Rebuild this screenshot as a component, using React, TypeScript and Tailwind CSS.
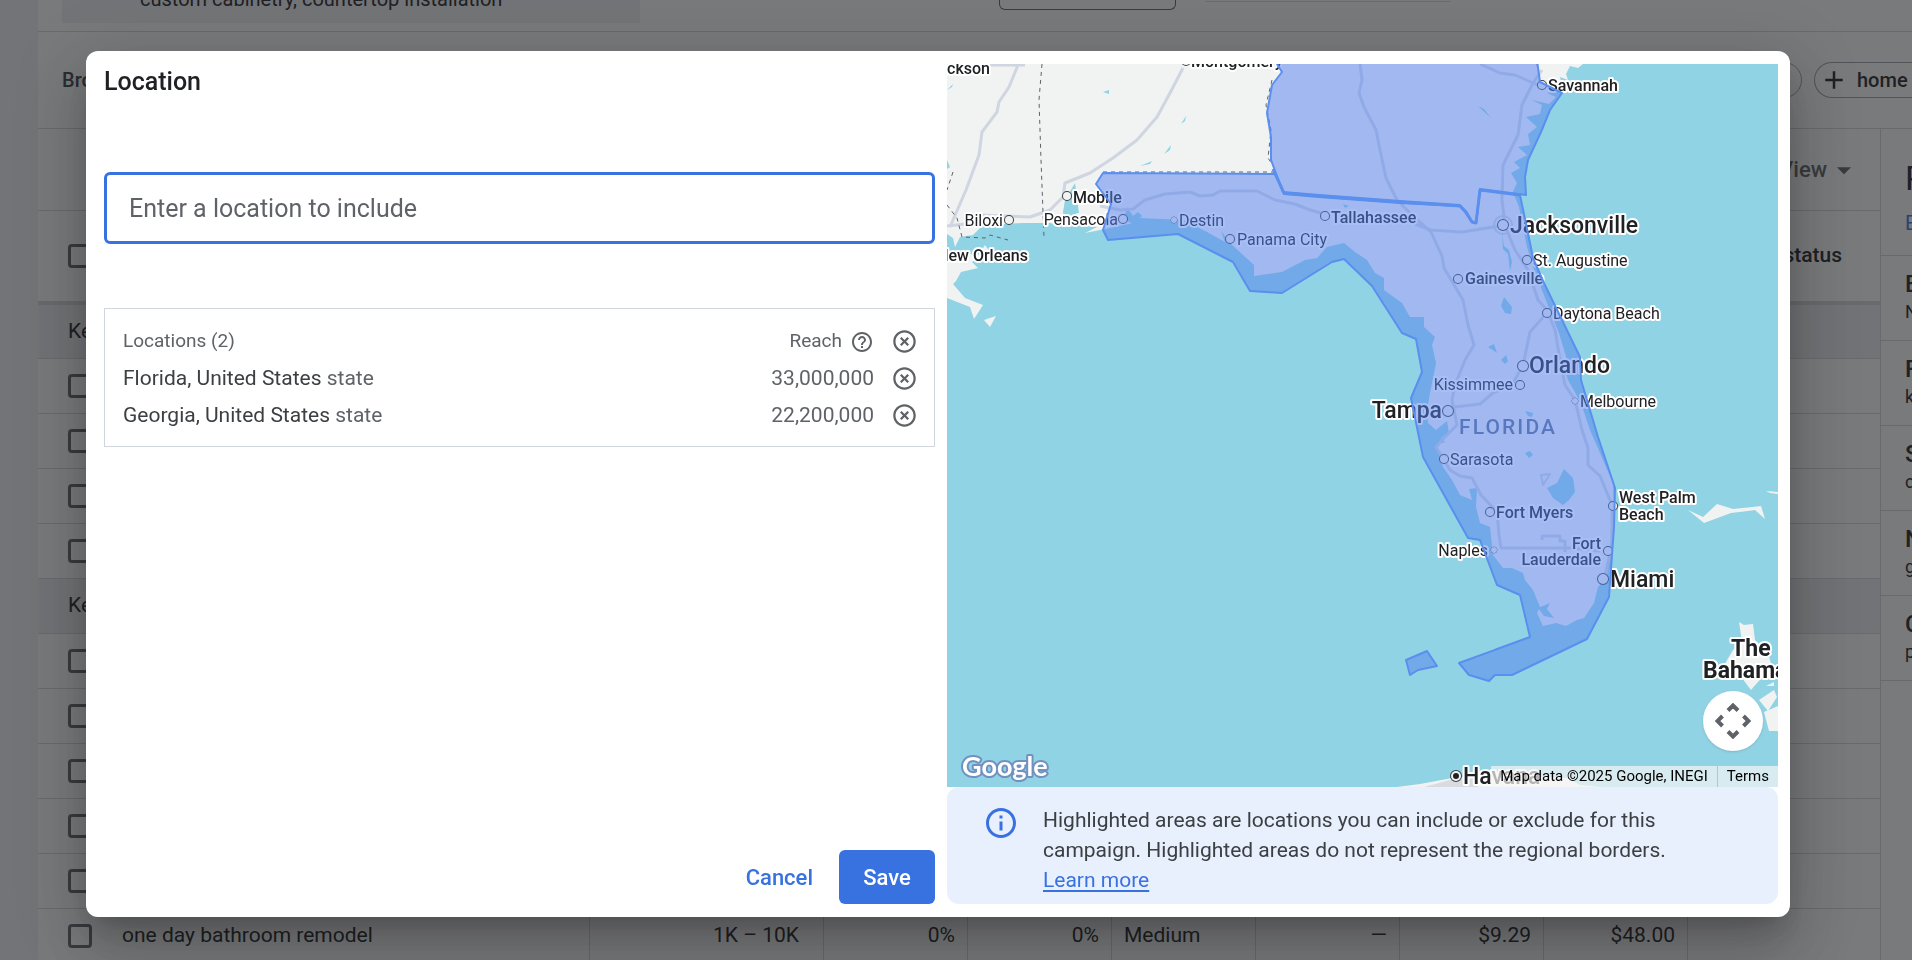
import React from "react";
import clsx from "clsx";
import {
  MdAdd,
  MdArrowDropDown,
  MdHelpOutline,
  MdHighlightOff,
  MdInfoOutline,
} from "react-icons/md";

type KeywordRow = {
  id: string;
  group?: string;
  keyword?: string;
  cells?: string[];
};

const keywordRows: KeywordRow[] = [
  { id: "provided", group: "Keywords you provided" },
  { id: "p1" },
  { id: "p2" },
  { id: "p3" },
  { id: "p4" },
  { id: "ideas", group: "Keyword ideas" },
  { id: "i1" },
  { id: "i2" },
  { id: "i3" },
  { id: "i4" },
  { id: "i5" },
  {
    id: "i6",
    keyword: "one day bathroom remodel",
    cells: ["1K – 10K", "0%", "0%", "Medium", "—", "$9.29", "$48.00", ""],
  },
];

const refinements = [
  ["B", "N"],
  ["F", "k"],
  ["S", "c"],
  ["N", "g"],
  ["C", "p"],
];

const locations = [
  { name: "Florida, United States", type: "state", reach: "33,000,000" },
  { name: "Georgia, United States", type: "state", reach: "22,200,000" },
];

function Checkbox({ label }: { label: string }) {
  return (
    <input
      type="checkbox"
      aria-label={label}
      className="block size-6 shrink-0 appearance-none rounded-[4px] border-3 border-[#5f6368]"
    />
  );
}

function KeywordTable() {
  return (
    <table className="w-full table-fixed border-separate border-spacing-0 text-left text-[21px]">
      <colgroup>
        <col className="w-[552px]" />
        <col className="w-[234px]" />
        <col className="w-36" />
        <col className="w-36" />
        <col className="w-36" />
        <col className="w-36" />
        <col className="w-36" />
        <col className="w-36" />
        <col />
      </colgroup>
      <thead>
        <tr>
          <th className="h-[94px] border-b-4 border-[#d5d7da] pl-[30px]">
            <Checkbox label="Select all keywords" />
          </th>
          <th
            colSpan={8}
            className="border-b-4 border-[#d5d7da] pr-[38px] text-right font-medium"
          >
            Account status
          </th>
        </tr>
      </thead>
      <tbody>
        {keywordRows.map((row) =>
          row.group ? (
            <tr key={row.id} className="bg-[#ebedef]">
              <td
                colSpan={9}
                className={clsx(
                  "border-b border-[#d5d7da] py-0 pl-[30px]",
                  row.id === "provided" ? "h-[54px]" : "h-[55px]"
                )}
              >
                {row.group}
              </td>
            </tr>
          ) : (
            <tr key={row.id}>
              <td className="h-[55px] border-r border-b border-[#d5d7da] py-0 pl-[30px]">
                <div className="flex items-center gap-[30px]">
                  <Checkbox label={row.keyword ?? `Keyword ${row.id}`} />
                  {row.keyword}
                </div>
              </td>
              {row.cells ? (
                row.cells.map((cell, i) => (
                  <td
                    key={i}
                    className={clsx(
                      "border-b border-[#d5d7da] py-0",
                      i < 7 && "border-r",
                      i === 0 && "pr-6 text-right",
                      i === 3 && "pl-3",
                      i > 0 && i !== 3 && "pr-3 text-right"
                    )}
                  >
                    {cell}
                  </td>
                ))
              ) : (
                <td colSpan={8} className="border-b border-[#d5d7da]" />
              )}
            </tr>
          )
        )}
      </tbody>
    </table>
  );
}

function KeywordPlanner() {
  return (
    <div className="flex h-screen flex-col overflow-hidden bg-[#f0f1f3] pl-[38px] text-[#202124]">
      <div className="flex h-8 shrink-0 items-start border-b border-[#d5d7da] bg-white pl-6">
        <div className="h-[23px] w-[578px] shrink-0 bg-[#f0f1f3] pl-[78px] text-xl leading-none">
          <div className="-mt-[11px]">custom cabinetry, countertop installation</div>
        </div>
        <div className="ml-[359px] h-2.5 w-[177px] shrink-0 rounded-b-md border border-t-0 border-[#5f6368]" />
        <div className="ml-[30px] h-0.5 w-[244px] shrink-0 border-b border-[#d5d7da]" />
      </div>

      <div className="flex h-[97px] shrink-0 items-center justify-between border-b border-[#d5d7da] bg-white pl-6">
        <span className="text-xl font-medium text-[#3c4043]">
          Broaden your search
        </span>
        <div className="flex shrink-0 gap-3">
          <button
            type="button"
            aria-label="Add suggestion"
            className="h-9 w-32 rounded-full border border-[#9aa0a6]"
          />
          <button
            type="button"
            className="flex h-9 w-[98px] items-center gap-2 rounded-l-full border border-r-0 border-[#9aa0a6] pl-1 text-xl font-medium"
          >
            <MdAdd size={30} />
            home
          </button>
        </div>
      </div>

      <div className="flex flex-1">
        <div className="min-w-0 flex-1 bg-white">
          <div className="flex h-[82px] items-center justify-end border-b border-[#d5d7da] pr-[19px] text-[22px] font-medium text-[#5f6368]">
            View
            <MdArrowDropDown size={34} />
          </div>
          <KeywordTable />
        </div>
        <aside className="w-8 shrink-0 overflow-hidden border-l border-[#d5d7da] bg-white">
          <div className="flex h-[127px] flex-col border-b border-[#d5d7da] pt-8 pl-6">
            <span className="text-[34px] leading-[34px]">R</span>
            <a href="#refine" className="pt-4 text-xl leading-6 text-[#3871e0]">
              E
            </a>
          </div>
          {refinements.map(([title, detail], i) => (
            <div
              key={i}
              className="flex h-[85px] flex-col justify-center border-b border-[#d5d7da] pl-6"
            >
              <span className="text-2xl leading-7 font-medium">{title}</span>
              <span className="text-lg leading-7">{detail}</span>
            </div>
          ))}
        </aside>
      </div>
    </div>
  );
}

type City = {
  name: string;
  x: number;
  y: number;
  size?: "md" | "lg";
  weight?: "medium" | "bold";
  end?: boolean;
  dot?: [number, number, number];
};

const cities: City[] = [
  { name: "Jackson", x: 990, y: 74, weight: "medium", end: true },
  { name: "Montgomery", x: 1191, y: 67, weight: "medium", dot: [1186, 61, 4] },
  { name: "Mobile", x: 1073, y: 203, weight: "medium", dot: [1067, 196, 4] },
  { name: "Biloxi", x: 1003, y: 226, end: true, dot: [1009, 220, 4] },
  { name: "Pensacola", x: 1118, y: 225, end: true, dot: [1123, 219, 4] },
  { name: "New Orleans", x: 1028, y: 261, weight: "medium", end: true },
  { name: "Destin", x: 1179, y: 226, dot: [1174, 220, 3] },
  { name: "Panama City", x: 1237, y: 245, dot: [1230, 239, 4] },
  { name: "Tallahassee", x: 1331, y: 223, weight: "medium", dot: [1325, 216, 4] },
  { name: "Savannah", x: 1548, y: 91, weight: "medium", dot: [1542, 85, 4] },
  { name: "Jacksonville", x: 1510, y: 233, size: "lg", weight: "medium", dot: [1503, 225, 5] },
  { name: "St. Augustine", x: 1533, y: 266, dot: [1527, 260, 4] },
  { name: "Gainesville", x: 1465, y: 284, weight: "medium", dot: [1458, 279, 4] },
  { name: "Daytona Beach", x: 1553, y: 319, dot: [1547, 313, 4] },
  { name: "Orlando", x: 1529, y: 373, size: "lg", weight: "medium", dot: [1523, 366, 5] },
  { name: "Kissimmee", x: 1513, y: 390, end: true, dot: [1520, 385, 4] },
  { name: "Melbourne", x: 1580, y: 407, dot: [1575, 401, 3] },
  { name: "Tampa", x: 1442, y: 418, size: "lg", weight: "medium", end: true, dot: [1448, 411, 5] },
  { name: "Sarasota", x: 1450, y: 465, dot: [1444, 459, 4] },
  { name: "Fort Myers", x: 1496, y: 518, weight: "medium", dot: [1490, 512, 4] },
  { name: "West Palm", x: 1619, y: 503, weight: "medium", dot: [1613, 506, 4] },
  { name: "Beach", x: 1619, y: 520, weight: "medium" },
  { name: "Fort", x: 1601, y: 549, weight: "medium", end: true, dot: [1608, 551, 4] },
  { name: "Lauderdale", x: 1601, y: 565, weight: "medium", end: true },
  { name: "Naples", x: 1488, y: 556, end: true, dot: [1494, 550, 3] },
  { name: "Miami", x: 1610, y: 587, size: "lg", weight: "medium", dot: [1603, 579, 5] },
  { name: "The", x: 1731, y: 656, size: "lg", weight: "bold" },
  { name: "Bahamas", x: 1703, y: 678, size: "lg", weight: "bold" },
  { name: "Havana", x: 1463, y: 784, size: "lg", weight: "medium", dot: [1456, 776, 5] },
];

const mainland =
  "M947 64H1583L1578 68L1570 66L1566 74L1568 80L1560 77L1563 90L1547 93L1556 97L1549 104L1532 100L1542 105L1540 114L1526 117L1537 127L1528 134L1530 145L1518 147L1527 155L1514 162L1520 168L1511 173L1517 183L1513 192L1519 207L1523 227L1527 247L1534 270L1547 303L1559 333L1567 360L1561 358L1568 380L1581 403L1590 430L1603 460L1613 483L1614 507L1610 547L1607 577L1598 587L1594 603L1584 618L1577 620L1566 626L1556 623L1543 626L1537 613L1540 607L1533 590L1525 580L1523 573L1512 568L1503 568L1493 555L1490 527L1480 523L1476 507L1477 488L1469 489L1472 500L1460 495L1452 480L1443 467L1437 445L1445 442L1441 438L1449 433L1447 421L1436 430L1428 423L1427 410L1430 393L1436 363L1432 345L1435 337L1424 327L1424 317L1410 317L1402 303L1384 290L1384 278L1375 273L1367 260L1355 252L1344 243L1327 247L1317 258L1305 260L1282 272L1254 276L1254 265L1232 245L1221 231L1225 242L1207 232L1183 220L1140 218L1133 223L1110 228L1085 233L1097 227L1077 223L1076 205L1070 200L1065 203L1063 213L1067 227L1050 223L1023 223L983 225L973 235L960 237L955 247L953 238L947 234Z";

function MapLand() {
  return (
    <g>
      <g fill="#f0f3f2">
        <path d={mainland} />
        <path d="M947 258L966 252L977 257L985 245L990 252L972 262L978 268L961 272L956 281L953 284L965 298L983 305L974 319L970 307L947 298Z" />
        <path d="M984 320L996 316L990 327Z" />
        <path d="M1688 510L1703 517L1717 504L1733 509L1761 506L1765 519L1755 510L1731 513L1704 523Z" />
        <path d="M1766 491L1778 492V494L1770 493Z" />
        <path d="M1739 622L1744 625L1753 624L1755 640L1768 653L1772 667L1757 683L1751 690L1742 678L1723 667L1733 650L1742 642Z" />
        <path d="M1766 686L1774 682L1774 686Z" />
        <path d="M1759 700L1774 690L1777 697L1768 711Z" />
        <path d="M1764 712L1778 706V731H1769Z" />
        <path d="M1397 787L1420 784L1452 778L1500 774L1568 778L1580 785L1601 787Z" />
      </g>
      <path d="M1424 787L1454 779L1480 777L1478 787Z" fill="#d8dbe0" />
      {/* lakes and inlets */}
      <g fill="#90d3e5">
        <path d="M1564 469L1573 478L1575 492L1569 500L1563 505L1553 498L1547 488L1557 483Z" />
        <path d="M1103 92L1109 90L1109 94Z" />
        <path d="M1181 124L1186 116L1185 121Z" />
        <path d="M1164 154L1171 145L1170 150Z" />
        <path d="M1140 166L1152 161L1150 164Z" />
        <path d="M947 90L953 84L952 87Z" />
        <path d="M947 160L950 167L947 169Z" />
        <path d="M1075 183L1079 213L1063 213L1065 200Z" />
        <path d="M1127 207L1133 216L1138 212L1142 216L1133 224L1124 219Z" />
        <path d="M1478 106L1484 109L1491 118Z" />
        <path d="M1343 204L1349 206L1345 208Z" />
        <path d="M1502 233L1503 249L1508 254L1510 271L1512 262L1509 250L1504 246Z" />
        <path d="M1504 297L1512 307L1511 314L1505 313L1501 306Z" />
        <path d="M1488 347L1494 344L1497 353Z" />
        <path d="M1501 360L1506 355L1508 361L1505 364Z" />
        <path d="M1525 411L1533 413L1532 417L1528 416Z" />
        <path d="M1525 453L1530 451L1533 455L1529 458Z" />
        <path d="M1538 608L1550 603L1547 609L1554 618L1544 616Z" />
      </g>
      <g fill="none" stroke="#cfd5e1" strokeWidth="3" strokeLinejoin="round">
        <path d="M990 65H1025" />
        <path d="M1018 65L1009 87L999 102L997 112L982 132L979 155L966 190L950 227" />
        <path d="M1183 68L1170 93L1157 117L1137 140L1113 158L1090 173L1065 183L1063 197L1050 210L1030 217L983 215" />
        <path d="M947 226L965 224" />
        <path d="M1100 206L1120 210L1133 209L1145 200L1165 194L1190 192L1200 196L1213 195L1220 191H1257L1275 200L1295 204L1310 210L1325 214" />
        <path d="M1360 64L1362 80L1359 93L1364 107L1376 130L1380 150L1386 178L1397 200L1415 218L1431 232L1442 256L1444 268L1463 300L1468 325L1474 345L1465 360L1455 385L1452 400L1457 425L1444 438L1436 447L1450 470L1460 476L1472 478L1481 495L1497 512L1499 535L1501 548H1570L1600 551" />
        <path d="M1415 224L1431 230L1462 232L1500 226" />
        <path d="M1542 70L1533 83L1522 105L1518 135L1503 165L1502 200L1505 226L1515 250L1528 270L1538 300L1547 310L1555 330L1560 360L1565 385L1575 400L1582 430L1588 448L1588 465L1600 476L1612 505L1612 545L1604 580" />
        <path d="M1480 64L1500 73L1515 75L1540 86" />
        <path d="M1545 315L1530 332L1523 365L1512 385L1493 393L1480 404L1455 407" />
        <circle cx="1503" cy="225" r="9" strokeWidth="2" />
        <path d="M1541 475L1550 474L1543 485Z" strokeWidth="2" />
        <path d="M1542 540V536H1560V541H1565V552" strokeWidth="3" />
      </g>
      <g fill="none" stroke="#5f6368" strokeWidth="1" strokeDasharray="4 4">
        <path d="M1042 64L1039 100L1041 160L1044 238" />
        <path d="M1103 172H1276" />
        <path d="M1272 80L1266 105L1271 130L1268 158L1272 164" />
        <path d="M1537 64L1540 82" />
        <path d="M953 172L947 190M947 205L957 218L962 237L985 238L990 235L1008 240" />
      </g>
    </g>
  );
}

function MapLabels() {
  return (
    <g
      fill="#202124"
      stroke="#ffffff"
      strokeWidth="4"
      strokeLinejoin="round"
      paintOrder="stroke"
      className="font-[Roboto,sans-serif]"
    >
      {cities.map((city) => (
        <React.Fragment key={city.name}>
          <text
            x={city.x}
            y={city.y}
            textAnchor={city.end ? "end" : "start"}
            className={clsx(
              city.size === "lg" ? "text-[23px]" : "text-base",
              city.weight === "bold" && "font-bold",
              city.weight === "medium" && "font-medium"
            )}
          >
            {city.name}
          </text>
          {city.dot && (
            <circle
              cx={city.dot[0]}
              cy={city.dot[1]}
              r={city.dot[2]}
              fill="#f0f3f2"
              stroke="#3c4043"
              strokeWidth={city.dot[2] === 3 ? 1 : 2}
            />
          )}
        </React.Fragment>
      ))}
      <circle cx="1456" cy="776" r="3" fill="#202124" stroke="none" />
      <text
        x="1459"
        y="434"
        fill="#5f6f8f"
        stroke="none"
        className="text-[21px] font-medium tracking-widest"
      >
        FLORIDA
      </text>
    </g>
  );
}

function LocationMap() {
  return (
    <div className="relative min-h-0 flex-1 overflow-hidden bg-[#90d3e5]">
      <svg
        role="img"
        aria-label="Map of the targeted locations"
        viewBox="947 64 831 723"
        preserveAspectRatio="xMidYMid slice"
        className="block size-full"
      >
        <MapLand />
        <MapLabels />
        <g
          fill="#527fee"
          fillOpacity="0.5"
          stroke="#5b8fee"
          strokeWidth="2"
          strokeLinejoin="round"
        >
          {/* Georgia */}
          <path d="M1277 60V64L1282 72L1272 85L1267 113L1271 137V160L1283 192L1319 195L1400 201L1460 205L1466 212L1472 222L1476 223L1477 215L1480 189L1526 195L1525 177L1528 160L1541 132L1550 110L1562 93L1540 82L1537 60Z" />
          {/* Florida and the western Keys */}
          <path d="M1103 173L1275 174L1284 194L1319 197L1400 203L1460 206L1465 212L1471 221L1476 223L1480 190L1520 195L1530 243L1533 258L1544 283L1580 357L1581 380L1598 437L1615 488L1614 527L1609 597L1587 639L1512 675H1495L1489 681L1469 675L1459 663L1530 637L1520 595L1497 585L1480 540L1468 538L1423 457L1411 398L1422 372L1416 339L1402 333L1372 286L1344 259L1332 262L1282 293L1250 291L1233 262L1178 234L1108 240L1103 230L1111 204L1096 184Z" />
          <path d="M1406 660L1427 651L1437 666L1418 670L1410 675Z" />
        </g>
        {/* shared state border reads heavier than the coast */}
        <path
          d="M1273 169L1284 193L1319 196L1400 202L1460 206L1466 212L1472 222L1476 223L1480 190L1520 195"
          fill="none"
          stroke="#5b8fee"
          strokeWidth="3"
          strokeLinejoin="round"
        />
        <text
          x="962"
          y="776"
          fill="#ffffff"
          stroke="#7191c1"
          strokeWidth="4"
          strokeLinejoin="round"
          paintOrder="stroke"
          className="font-[Lato,sans-serif] text-[27px] font-bold"
        >
          Google
        </text>
      </svg>

      <button
        type="button"
        aria-label="Map camera controls"
        className="absolute right-[15px] bottom-9 flex size-[60px] items-center justify-center rounded-full bg-white shadow-sm"
      >
        <svg
          viewBox="0 0 36 36"
          fill="none"
          stroke="#5f6368"
          strokeWidth="4"
          className="size-9"
        >
          <path d="M13 7.500L18 2.500L23 7.500M13 28.500L18 33.500L23 28.500M7.500 13L2.500 18L7.500 23M28.500 13L33.500 18L28.500 23" />
        </svg>
      </button>

      <div className="absolute right-0 bottom-0 flex text-[15px] leading-[21px] text-black">
        <span className="bg-[#f5f5f5]/70 px-[9px]">
          Map data ©2025 Google, INEGI
        </span>
        <a href="#terms" className="ml-px bg-[#f5f5f5]/70 px-[9px]">
          Terms
        </a>
      </div>
    </div>
  );
}

function SelectedLocations() {
  return (
    <div className="mt-16 border border-[#d1d5de] pt-3.5 pr-4 pb-3 pl-[18px] text-[#5f6368]">
      <table className="w-full text-left text-[21px]">
        <thead>
          <tr className="h-[37px] text-[19px]">
            <th className="p-0 font-normal">Locations (2)</th>
            <th className="p-0 font-normal">
              <div className="flex items-center justify-end gap-2">
                Reach
                <MdHelpOutline size={24} />
              </div>
            </th>
            <th className="w-11 p-0">
              <button
                type="button"
                aria-label="Remove all locations"
                className="ml-auto block"
              >
                <MdHighlightOff size={27} />
              </button>
            </th>
          </tr>
        </thead>
        <tbody>
          {locations.map((location) => (
            <tr key={location.name} className="h-[37px]">
              <td className="p-0">
                <span className="text-[#3c4043]">{location.name}</span>{" "}
                {location.type}
              </td>
              <td className="p-0 text-right">{location.reach}</td>
              <td className="p-0">
                <button
                  type="button"
                  aria-label={`Remove ${location.name}`}
                  className="ml-auto block"
                >
                  <MdHighlightOff size={27} />
                </button>
              </td>
            </tr>
          ))}
        </tbody>
      </table>
    </div>
  );
}

function LocationDialog() {
  return (
    <div
      role="dialog"
      aria-modal="true"
      aria-labelledby="location-title"
      className="grid w-full grid-cols-2 gap-3 rounded-xl bg-white py-[13px] pr-3 pl-[18px] shadow-[0_16px_23px_-10px_rgba(0,0,0,0.2),0_36px_57px_4px_rgba(0,0,0,0.14),0_14px_69px_12px_rgba(0,0,0,0.12)]"
    >
      <section className="flex min-h-0 flex-col">
        <h1
          id="location-title"
          className="pt-0.5 text-[25px] leading-8 font-medium text-[#202124]"
        >
          Location
        </h1>
        <input
          type="text"
          aria-label="Enter a location to include"
          placeholder="Enter a location to include"
          className="mt-[74px] h-18 w-full rounded-md border-3 border-[#3871e0] px-[22px] text-[25px] text-[#202124] outline-none placeholder:text-[#5f6368]"
        />
        <SelectedLocations />
        <div className="mt-auto flex justify-end gap-2 text-[22px] font-medium">
          <button type="button" className="h-[54px] px-[18px] text-[#3871e0]">
            Cancel
          </button>
          <button
            type="button"
            className="h-[54px] w-24 rounded-md bg-[#3871e0] text-white"
          >
            Save
          </button>
        </div>
      </section>

      <section className="flex min-h-0 flex-col">
        <LocationMap />
        <div className="flex gap-6 rounded-xl bg-[#e8f0fe] pt-[18px] pr-20 pb-[9px] pl-9 text-[21px] leading-[30px] text-[#3c4043]">
          <MdInfoOutline size={36} className="shrink-0 text-[#3871e0]" />
          <p>
            Highlighted areas are locations you can include or exclude for this
            campaign. Highlighted areas do not represent the regional borders.{" "}
            <a
              href="#learn-more"
              className="block text-[#3871e0] underline decoration-2 underline-offset-3"
            >
              Learn more
            </a>
          </p>
        </div>
      </section>
    </div>
  );
}

export default function App() {
  return (
    <div className="font-[Roboto,sans-serif]">
      <KeywordPlanner />
      <div className="fixed inset-0 flex bg-[#202124]/60 pt-[51px] pr-[122px] pb-[43px] pl-[86px]">
        <LocationDialog />
      </div>
    </div>
  );
}
